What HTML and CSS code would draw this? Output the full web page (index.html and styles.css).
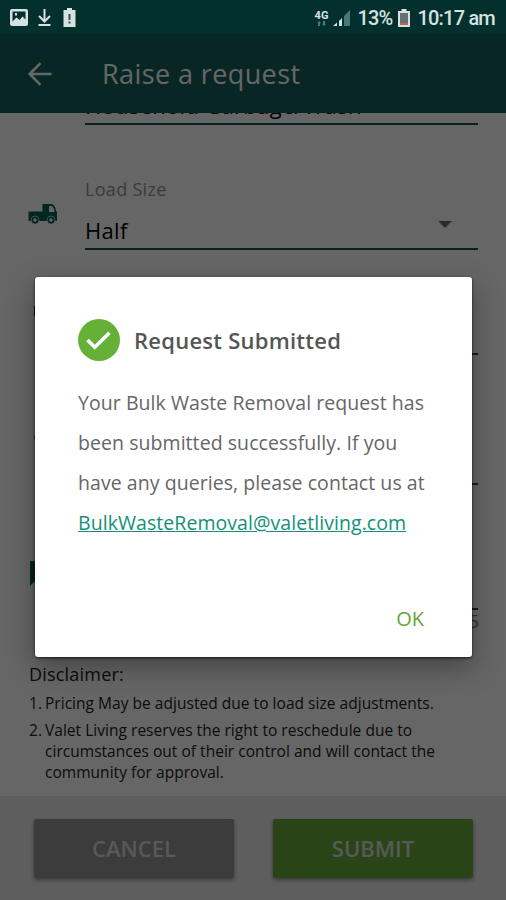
FILE: index.html
```html
<!DOCTYPE html>
<html lang="en">
<head>
    <meta charset="UTF-8">
    <meta name="viewport" content="width=device-width, initial-scale=1.0">
    <title>Raise a request</title>
    <link rel="stylesheet" href="styles.css">
</head>
<body>

    <!-- Status Bar -->
    <div class="status-bar">
        <div class="status-left">
            <svg width="18" height="17" viewBox="0 0 18 17">
                <path fill="#d5e2e1" fill-rule="evenodd" d="M2 0h14a2 2 0 0 1 2 2v13a2 2 0 0 1-2 2H2a2 2 0 0 1-2-2V2a2 2 0 0 1 2-2zM2.500 2.500v10l4-4 3 2.500 3-3.500 3 3v-8zM5 4h2v2.500H5z"/>
            </svg>
            <svg class="download" width="13" height="17" viewBox="0 0 13 17">
                <path fill="none" stroke="#d5e2e1" stroke-width="2" d="M6.500 0v12M1 7l5.500 5.500L12 7M.5 16h12"/>
            </svg>
            <svg width="13" height="19" viewBox="0 0 13 19">
                <path fill="#d5e2e1" d="M4 0h5v2h3.500v17H.5V2H4z"/>
                <path fill="#35534f" d="M5.500 6h2v6h-2zM5.500 13.500h2v2h-2z"/>
            </svg>
        </div>
        <div class="status-right">
            <div class="network">
                <span>4G</span>
                <svg width="9" height="5" viewBox="0 0 9 5">
                    <path fill="#477a76" d="M2 0l2 2H3v3H1V2H0zM6 0h2v3h1L7 5 5 3h1z"/>
                </svg>
            </div>
            <svg class="signal" width="18" height="17" viewBox="0 0 18 17">
                <path fill="#d5e2e1" d="M0 17l4-3.500V17zM6 12l3-3v8H6z"/>
                <path fill="#477a76" d="M11 7l6-6v16h-6z"/>
            </svg>
            <span class="percent">13%</span>
            <svg class="battery" width="12" height="18" viewBox="0 0 12 18">
                <path fill="#d5e2e1" d="M3.500 0h5v2H12v16H0V2h3.500z"/>
                <path fill="#66716f" d="M2 4h8v10H2z"/>
                <path fill="#c4615f" d="M2 14h8v2H2z"/>
            </svg>
            <span class="clock">10:17 am</span>
        </div>
    </div>

    <div class="screen">
        <!-- App Bar -->
        <div class="app-bar">
            <svg width="24" height="24" viewBox="0 0 24 24">
                <path fill="none" stroke="#fff" stroke-width="2.600" d="M23.500 12H2M12.500 1.200L1.700 12l10.800 10.800"/>
            </svg>
            <h1>Raise a request</h1>
        </div>

        <!-- Request Form -->
        <div class="form">
            <div class="field field-type">
                <div class="value">Household Garbage/Trash</div>
            </div>
            <div class="field field-load">
                <svg class="field-icon" width="30" height="22" viewBox="0 0 30 22">
                    <path fill="#0c6050" fill-rule="evenodd" d="M.5 8.500h14V1H23q4 0 5 7l1 1v9H.5zM21 3v6h5.500q-.5-5-3-6z"/>
                    <circle cx="7" cy="17" r="4" fill="#0c6050" stroke="#fff" stroke-width=".6"/>
                    <circle cx="23" cy="17" r="4" fill="#0c6050" stroke="#fff" stroke-width=".6"/>
                    <circle cx="7" cy="17" r="1.700" fill="#fff"/>
                    <circle cx="23" cy="17" r="1.700" fill="#fff"/>
                </svg>
                <div class="label">Load Size</div>
                <div class="value">Half</div>
                <div class="caret"></div>
            </div>
            <div class="field field-date">
                <svg class="field-icon" width="22" height="22" viewBox="0 0 22 22">
                    <path fill="#063b34" d="M0 0h22v10H0z"/>
                </svg>
            </div>
            <div class="field field-time">
                <svg class="field-icon" width="22" height="22" viewBox="0 0 22 22">
                    <path fill="#063b34" d="M0 0h22v10H2z"/>
                </svg>
            </div>
            <div class="field field-notes">
                <svg class="field-icon" width="26" height="26" viewBox="0 0 26 26">
                    <path fill="#0a5a4c" d="M0 0h26v20H5l-5 5z"/>
                </svg>
            </div>
            <div class="counter">0/255</div>

            <div class="disclaimer">
                <h2>Disclaimer:</h2>
                <ol>
                    <li><span>1.</span><p>Pricing May be adjusted due to load size adjustments.</p></li>
                    <li><span>2.</span><p>Valet Living reserves the right to reschedule due to<br>circumstances out of their control and will contact the<br>community for approval.</p></li>
                </ol>
            </div>
        </div>

        <!-- Buttons -->
        <div class="actions">
            <button class="btn btn-cancel">CANCEL</button>
            <button class="btn btn-submit">SUBMIT</button>
        </div>

        <!-- Confirmation Dialog -->
        <div class="overlay">
            <div class="dialog">
                <div class="dialog-title">
                    <svg width="42" height="42" viewBox="0 0 42 42">
                        <circle cx="21" cy="21" r="21" fill="#65b036"/>
                        <path fill="none" stroke="#fff" stroke-width="3.600" d="M9.500 21l7.300 7.300L31.500 13.700"/>
                    </svg>
                    <h2>Request Submitted</h2>
                </div>
                <p class="message">Your Bulk Waste Removal request has<br>been submitted successfully. If you<br>have any queries, please contact us at<br><a href="#">BulkWasteRemoval@valetliving.com</a></p>
                <button class="ok">OK</button>
            </div>
        </div>
    </div>

</body>
</html>
```
FILE: styles.css
```css
/* General */
* {
    box-sizing: border-box;
}

body {
    margin: 0;
    width: 506px;
    height: 900px;
    overflow: hidden;
    background-color: white;
    font-family: "Open Sans", "Noto Sans", sans-serif;
}

h1, h2, p, ol {
    margin: 0;
    padding: 0;
    font-weight: normal;
}

svg {
    display: block;
    flex-shrink: 0;
}

button {
    font-family: inherit;
    border: none;
    cursor: pointer;
}

/* Status bar */
.status-bar {
    display: flex;
    justify-content: space-between;
    align-items: center;
    height: 34px;
    padding: 1px 11px 0 10px;
    background-color: #03302c;
    color: #d5e2e1;
    font-family: Roboto, sans-serif;
}

.status-left, .status-right {
    display: flex;
    align-items: center;
}

.download {
    margin: 0 12px 0 10px;
}

.network {
    display: flex;
    flex-direction: column;
    align-items: center;
    font-size: 11px;
    font-weight: bold;
    line-height: 11px;
}

.signal {
    margin: 0 6px 0 5px;
}

.percent, .clock {
    font-size: 20px;
    font-weight: 500;
    line-height: 34px;
    letter-spacing: -0.8px;
}

.battery {
    margin: 0 7px 0 6px;
}

/* Everything under the status bar */
.screen {
    position: relative;
    display: flex;
    flex-direction: column;
    height: 866px;
}

.app-bar {
    display: flex;
    align-items: center;
    gap: 50px;
    height: 79px;
    padding-left: 28px;
    background-color: #125f5a;
    color: white;
}

.app-bar h1 {
    font-size: 27px;
    letter-spacing: 0.4px;
}

/* Form */
.form {
    height: 683px;
    overflow: hidden;
}

.field {
    position: relative;
    display: flex;
    flex-direction: column;
    justify-content: flex-end;
    margin: 0 28px 0 85px;
    border-bottom: 2px solid #17534b;
}

.field-type {
    height: 12px;
}

.field-load {
    height: 125px;
}

.field-date {
    height: 105px;
}

.field-time {
    height: 130px;
}

.field-notes {
    height: 125px;
}

.field-icon {
    position: absolute;
    left: -57px;
    bottom: 23px;
}

.field-date .field-icon, .field-time .field-icon {
    left: -51px;
    bottom: 25px;
}

.field-notes .field-icon {
    left: -55px;
    bottom: 21px;
}

.label {
    margin-bottom: 14px;
    color: #939393;
    font-size: 18px;
    line-height: 24px;
    letter-spacing: 0.3px;
}

.value {
    padding-bottom: 3px;
    font-size: 22px;
    line-height: 30px;
    letter-spacing: 0.3px;
}

.caret {
    position: absolute;
    right: 26px;
    bottom: 20px;
    border: 7px solid transparent;
    border-top-color: #6b6b6b;
    border-bottom: none;
}

.counter {
    margin-right: 27px;
    color: #777;
    font-size: 18px;
    line-height: 22px;
    text-align: right;
}

.disclaimer {
    padding: 30px 0 0 29px;
    color: #222;
}

.disclaimer h2 {
    font-size: 18px;
    line-height: 25px;
    letter-spacing: 0.2px;
}

.disclaimer ol {
    list-style: none;
}

.disclaimer li {
    display: flex;
    margin-top: 6px;
    font-size: 15.500px;
    line-height: 21px;
    letter-spacing: 0.03px;
}

.disclaimer li span {
    width: 16px;
}

/* Buttons */
.actions {
    display: flex;
    gap: 39px;
    height: 104px;
    padding: 23px 33px 0 34px;
    background-color: #ebebeb;
}

.btn {
    width: 200px;
    height: 59px;
    padding-bottom: 3px;
    border-radius: 2px;
    color: #ddd;
    font-size: 22px;
    font-weight: 600;
    box-shadow: 0 2px 4px rgba(0, 0, 0, 0.4);
}

.btn-cancel {
    background-color: #969696;
}

.btn-submit {
    background-color: #66ad3c;
}

/* Dialog */
.overlay {
    position: absolute;
    top: 0;
    left: 0;
    width: 100%;
    height: 100%;
    padding: 243px 34px 0 35px;
    background-color: rgba(0, 0, 0, 0.6);
}

.dialog {
    display: flex;
    flex-direction: column;
    height: 380px;
    padding: 42px 42px 0 43px;
    border-radius: 3px;
    background-color: white;
    box-shadow: 0 10px 28px rgba(0, 0, 0, 0.35), 0 1px 3px rgba(0, 0, 0, 0.7);
}

.dialog-title {
    display: flex;
    align-items: center;
    gap: 14px;
}

.dialog-title h2 {
    color: #555;
    font-size: 22px;
    font-weight: 600;
    letter-spacing: 0.25px;
}

.message {
    margin-top: 22px;
    color: #666;
    font-size: 19.500px;
    line-height: 40px;
    letter-spacing: 0.06px;
    white-space: nowrap;
}

.message a {
    color: #159078;
}

.ok {
    align-self: flex-end;
    margin-top: 61px;
    padding: 0 6px 0 0;
    background: none;
    color: #65a536;
    font-size: 20px;
    line-height: 30px;
}
```
